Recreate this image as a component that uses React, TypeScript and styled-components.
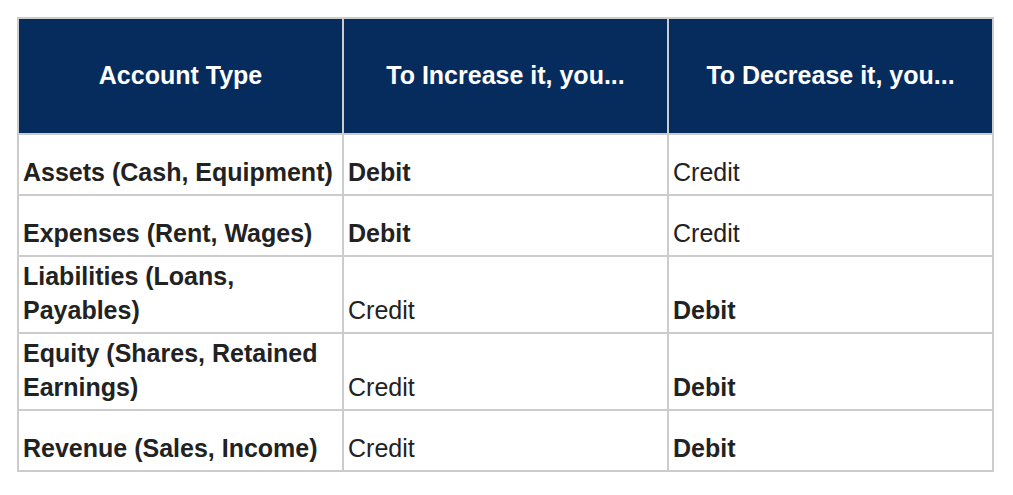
import React from "react";
import styled, { createGlobalStyle } from "styled-components";

const GlobalStyle = createGlobalStyle`
  body {
    margin: 0;
    background: #ffffff;
    font-family: "Liberation Sans", Arial, sans-serif;
  }
`;

const Page = styled.div`
  padding: 17px;
`;

const Table = styled.table`
  width: 977px;
  table-layout: fixed;
  border-collapse: separate;
  border-spacing: 0;
  border: 1px solid #cccccc;
  font-size: 25px;
  line-height: 34px;
  color: #222222;
`;

const Row = styled.tr<{ $height: number }>`
  height: ${(p) => p.$height}px;
`;

const HeadCell = styled.th`
  background: #062c5e;
  color: #ffffff;
  font-weight: bold;
  text-align: center;
  vertical-align: middle;
  border: 1px solid #cccccc;
  padding: 0 4px 2px;
`;

const Cell = styled.td<{ $bold?: boolean }>`
  border: 1px solid #cccccc;
  padding: 2px 4px 5px;
  vertical-align: bottom;
  text-align: left;
  font-weight: ${(p) => (p.$bold ? "bold" : "normal")};
`;

type Entry = {
  type: string;
  increase: string;
  decrease: string;
  height: number;
};

const rows: Entry[] = [
  { type: "Assets (Cash, Equipment)", increase: "Debit", decrease: "Credit", height: 61 },
  { type: "Expenses (Rent, Wages)", increase: "Debit", decrease: "Credit", height: 61 },
  { type: "Liabilities (Loans, Payables)", increase: "Credit", decrease: "Debit", height: 77 },
  { type: "Equity (Shares, Retained Earnings)", increase: "Credit", decrease: "Debit", height: 77 },
  { type: "Revenue (Sales, Income)", increase: "Credit", decrease: "Debit", height: 61 },
];

const App = () => {
  return (
    <Page>
      <GlobalStyle />
      <Table>
        <thead>
          <Row $height={116}>
            <HeadCell>Account Type</HeadCell>
            <HeadCell>To Increase it, you...</HeadCell>
            <HeadCell>To Decrease it, you...</HeadCell>
          </Row>
        </thead>
        <tbody>
          {rows.map((row) => (
            <Row $height={row.height} key={row.type}>
              <Cell $bold>{row.type}</Cell>
              <Cell $bold={row.increase === "Debit"}>{row.increase}</Cell>
              <Cell $bold={row.decrease === "Debit"}>{row.decrease}</Cell>
            </Row>
          ))}
        </tbody>
      </Table>
    </Page>
  );
};

export default App;
